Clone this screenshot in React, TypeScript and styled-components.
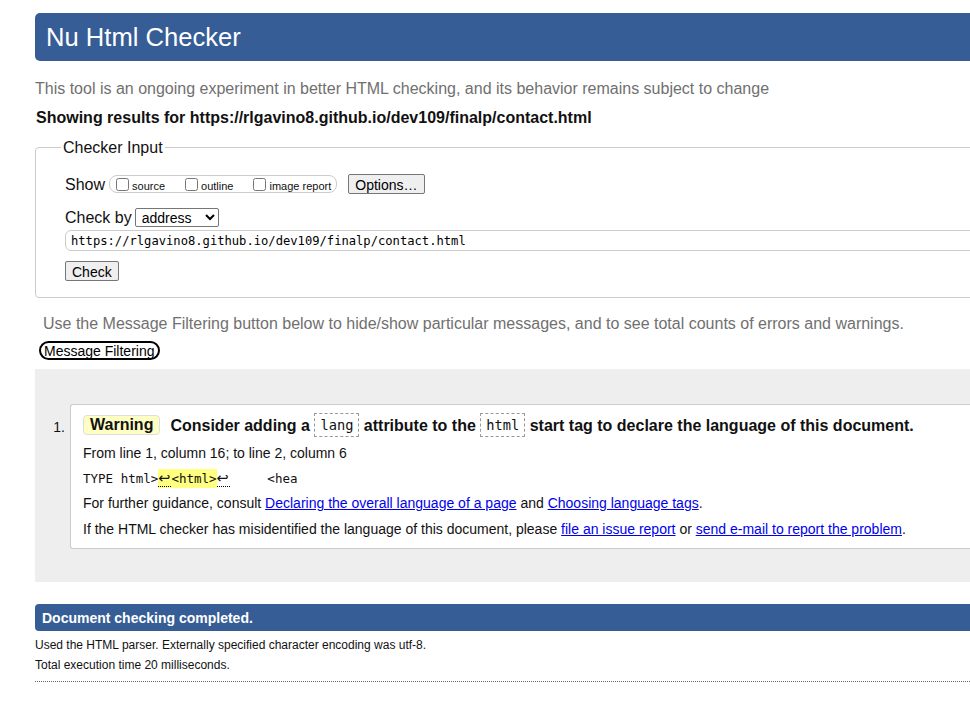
import React from "react";
import styled, { createGlobalStyle } from "styled-components";

const Global = createGlobalStyle`
  html, body { margin: 0; padding: 0; background: #fff; overflow: hidden; }
  body { font-family: "Liberation Sans", Arial, sans-serif; color: #111; }
`;

const BLUE = "#365d95";
const MONO = `"DejaVu Sans Mono", "Liberation Mono", monospace`;

const Page = styled.div`
  width: 1200px;
  padding: 13px 0 0 35px;
  box-sizing: border-box;
`;

const Header = styled.h1`
  margin: 0;
  height: 48px;
  background: ${BLUE};
  color: #fff;
  border-radius: 5px 0 0 5px;
  font-size: 25.6px;
  font-weight: normal;
  line-height: 48px;
  padding-left: 11px;
`;

const Intro = styled.p<{ $indent?: number; $top: number }>`
  margin: ${(p) => p.$top}px 0 0 ${(p) => p.$indent ?? 0}px;
  padding-top: 1px;
  font-size: 16px;
  line-height: 19px;
  color: #707070;
`;

const ResultsFor = styled.p`
  margin: 9px 0 0 1px;
  padding-top: 1px;
  font-size: 16px;
  line-height: 19px;
  font-weight: bold;
`;

const Fieldset = styled.fieldset`
  margin: 10px 0 0 0;
  padding: 17px 0 16px 29px;
  border: 1px solid #ccc;
  border-radius: 4px;
  min-width: 0;
`;

const Legend = styled.legend`
  padding: 1px 2px 0;
  margin-left: -4px;
  font-size: 16px;
  line-height: 19px;
`;

const Row = styled.div<{ $top?: number }>`
  display: flex;
  align-items: center;
  height: 20px;
  margin-top: ${(p) => p.$top ?? 0}px;
  font-size: 16px;
`;

const RowLabel = styled.span`
  padding-top: 2px;
`;

const CheckGroup = styled.span`
  display: inline-flex;
  align-items: center;
  height: 16px;
  margin-left: 4px;
  padding: 0 5px 0 2px;
  border: 1px solid #ccc;
  border-radius: 8px;
`;

const CheckLabel = styled.label<{ $last?: boolean }>`
  display: inline-flex;
  align-items: center;
  font-size: 11px;
  margin-right: ${(p) => (p.$last ? 0 : 16)}px;
`;

const LabelText = styled.span`
  padding-top: 3px;
`;

const Checkbox = styled.input`
  width: 13px;
  height: 13px;
  margin: 0 3px 0 4px;
`;

const Button = styled.button<{ $left?: number; $top?: number }>`
  display: block;
  height: 20px;
  margin: ${(p) => p.$top ?? 0}px 0 0 ${(p) => p.$left ?? 0}px;
  padding: 1px 6px 0;
  font-family: "Liberation Sans", Arial, sans-serif;
  font-size: 14px;
  color: #000;
  background: #efefef;
  border: 1px solid #767676;
  border-radius: 2px;
`;

const Select = styled.select`
  width: 84px;
  height: 19px;
  margin-left: 3px;
  padding: 0 0 0 2px;
  font-family: "Liberation Sans", Arial, sans-serif;
  font-size: 14px;
  color: #000;
  background: #fff;
  border: 1px solid #767676;
  border-radius: 2px;
`;

const UrlInput = styled.input`
  display: block;
  box-sizing: border-box;
  width: 1100px;
  height: 21px;
  margin-top: 3px;
  padding: 1px 5px 0;
  font-family: ${MONO};
  font-size: 12.15px;
  color: #000;
  border: 1px solid #ccc;
  border-radius: 6px;
  outline: none;
`;

const FilterButton = styled.button`
  display: block;
  height: 19px;
  margin: 8px 0 0 4px;
  padding: 1px 3px 0;
  font-family: "Liberation Sans", Arial, sans-serif;
  font-size: 14px;
  line-height: 15px;
  color: #000;
  background: #fff;
  border: 2px solid #000;
  border-radius: 10px;
`;

const Panel = styled.div`
  margin-top: 9px;
  background: #eee;
  padding: 35px 0 33px 0;
`;

const ItemRow = styled.div`
  display: flex;
  align-items: flex-start;
`;

const ItemNumber = styled.span`
  width: 35px;
  box-sizing: border-box;
  padding-right: 5px;
  margin-top: 13px;
  text-align: right;
  font-size: 14px;
  line-height: 20px;
`;

const Card = styled.div`
  flex: 1;
  background: #fff;
  border: 1px solid #ccc;
  border-right: none;
  border-radius: 3px 0 0 3px;
  padding: 8px 0 9px 12px;
`;

const Title = styled.p`
  margin: 0;
  padding-top: 1px;
  height: 23px;
  font-size: 16px;
  line-height: 24px;
  font-weight: bold;
  white-space: nowrap;
`;

const Badge = styled.span`
  display: inline-block;
  vertical-align: middle;
  margin: -3px 10px 0 0;
  padding: 0 6px;
  line-height: 18px;
  background: #ffffc4;
  border: 1px solid #ddd;
  border-radius: 4px;
`;

const Code = styled.code`
  display: inline-block;
  vertical-align: top;
  margin-top: -1px;
  padding: 0 5px;
  line-height: 22px;
  font-family: ${MONO};
  font-size: 13.7px;
  font-weight: normal;
  border: 1px dashed #999;
`;

const Line = styled.p<{ $top: number; $mono?: boolean }>`
  margin: ${(p) => p.$top}px 0 0 0;
  padding-top: 1px;
  font-size: ${(p) => (p.$mono ? "12.5px" : "14px")};
  font-family: ${(p) => (p.$mono ? MONO : "inherit")};
  line-height: 19px;
  white-space: pre;
`;

const Mark = styled.mark`
  background: #ffff80;
  color: inherit;
  padding: 2px 0 2px;
`;

const Newline = styled.span`
  font-family: "DejaVu Sans", sans-serif;
  font-size: 14.5px;
  letter-spacing: 1px;
  border-bottom: 1px dotted #000;
`;

const Link = styled.a`
  color: #0000ee;
  text-decoration: underline;
`;

const DoneBar = styled.h2`
  margin: 22px 0 0 0;
  height: 27px;
  box-sizing: border-box;
  padding: 1px 0 0 7px;
  background: ${BLUE};
  color: #fff;
  border-radius: 4px 0 0 4px;
  font-size: 14px;
  font-weight: bold;
  line-height: 26px;
`;

const Small = styled.p<{ $top: number }>`
  margin: ${(p) => p.$top}px 0 0 0;
  padding-top: 1px;
  font-size: 12px;
  line-height: 19px;
`;

const Dotted = styled.hr`
  margin: 6px 0 0 0;
  border: none;
  border-top: 1px dotted #666;
  height: 0;
`;

export default function App() {
  return (
    <>
      <Global />
      <Page>
        <Header>Nu Html Checker</Header>
        <Intro $top={17}>
          This tool is an ongoing experiment in better HTML checking, and its behavior remains subject to change
        </Intro>
        <ResultsFor>Showing results for https://rlgavino8.github.io/dev109/finalp/contact.html</ResultsFor>

        <Fieldset>
          <Legend>Checker Input</Legend>
          <Row>
            <RowLabel>Show</RowLabel>
            <CheckGroup>
              <CheckLabel>
                <Checkbox type="checkbox" />
                <LabelText>source</LabelText>
              </CheckLabel>
              <CheckLabel>
                <Checkbox type="checkbox" />
                <LabelText>outline</LabelText>
              </CheckLabel>
              <CheckLabel $last>
                <Checkbox type="checkbox" />
                <LabelText>image report</LabelText>
              </CheckLabel>
            </CheckGroup>
            <Button $left={11}>Options…</Button>
          </Row>
          <Row $top={13}>
            <RowLabel>Check by</RowLabel>
            <Select defaultValue="address">
              <option value="address">address</option>
              <option value="file">file upload</option>
              <option value="text">text input</option>
            </Select>
          </Row>
          <UrlInput readOnly value="https://rlgavino8.github.io/dev109/finalp/contact.html" />
          <Button $top={10}>Check</Button>
        </Fieldset>

        <Intro $top={15} $indent={8}>
          Use the Message Filtering button below to hide/show particular messages, and to see total counts of errors and warnings.
        </Intro>
        <FilterButton>Message Filtering</FilterButton>

        <Panel>
          <ItemRow>
            <ItemNumber>1.</ItemNumber>
            <Card>
              <Title>
                <Badge>Warning</Badge>
                Consider adding a <Code>lang</Code> attribute to the <Code>html</Code> start tag to declare the
                language of this document.
              </Title>
              <Line $top={6}>From line 1, column 16; to line 2, column 6</Line>
              <Line $top={5} $mono>
                TYPE html&gt;
                <Mark>
                  <Newline>↩</Newline>&lt;html&gt;
                </Mark>
                <Newline>↩</Newline>
                {"     <hea"}
              </Line>
              <Line $top={5}>
                For further guidance, consult <Link href="#">Declaring the overall language of a page</Link> and{" "}
                <Link href="#">Choosing language tags</Link>.
              </Line>
              <Line $top={6}>
                If the HTML checker has misidentified the language of this document, please{" "}
                <Link href="#">file an issue report</Link> or <Link href="#">send e-mail to report the problem</Link>.
              </Line>
            </Card>
          </ItemRow>
        </Panel>

        <DoneBar>Document checking completed.</DoneBar>
        <Small $top={4}>Used the HTML parser. Externally specified character encoding was utf-8.</Small>
        <Small $top={0}>Total execution time 20 milliseconds.</Small>
        <Dotted />
      </Page>
    </>
  );
}
